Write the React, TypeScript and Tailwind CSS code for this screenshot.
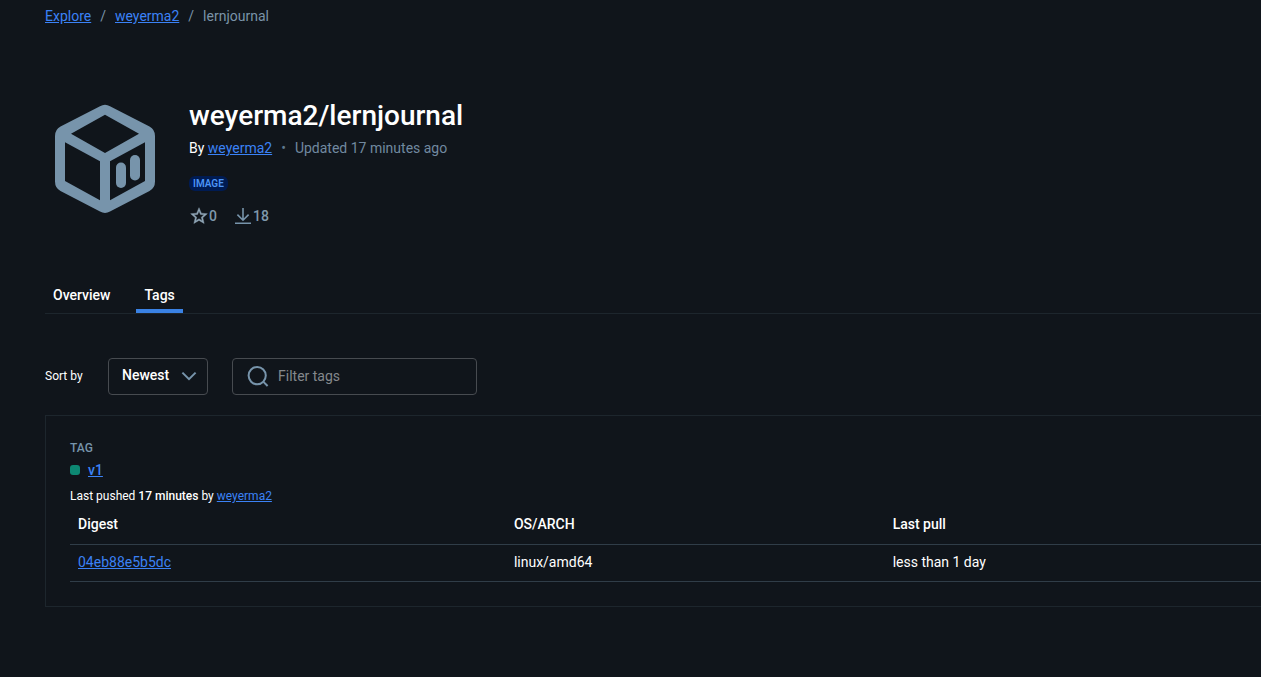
import { useState } from "react";

const link = "text-[#3b82f6] underline";

function PackageLogo() {
  return (
    <svg viewBox="15 14 100 110" className="h-[110px] w-[100px]" fill="#7794ab" aria-hidden="true">
      <path
        fillRule="evenodd"
        d="M60 16.2 Q65 13.2 70 16.2 L109.5 36.5 Q115 39.5 115 46 V91.5 Q115 98 109.5 101 L70 121.6 Q65 124.4 60 121.6 L20.5 101 Q15 98 15 91.5 V46 Q15 39.5 20.5 36.5 Z M65 24.8 L31 43.7 L65 63 L99 43.7 Z M25 52.3 V91 L60 110.3 V71.3 Z M105 52.3 L70 71.3 V110.3 L105 91 Z"
      />
      <rect x="76" y="72.5" width="10" height="25.5" rx="5" />
      <rect x="90" y="65" width="10" height="25.5" rx="5" />
    </svg>
  );
}

function StarIcon() {
  return (
    <svg viewBox="0 0 24 24" className="size-5" fill="#8fa5b6" stroke="#8fa5b6" strokeWidth="0.5" aria-hidden="true">
      <path d="M22 9.24l-7.19-.62L12 2 9.19 8.63 2 9.24l5.46 4.73L5.82 21 12 17.27 18.18 21l-1.63-7.03L22 9.24zM12 15.4l-3.76 2.27 1-4.28-3.32-2.88 4.38-.38L12 6.1l1.71 4.04 4.38.38-3.32 2.88 1 4.28L12 15.4z" />
    </svg>
  );
}

function DownloadIcon() {
  return (
    <svg viewBox="0 0 20 20" className="size-5" fill="none" stroke="#7794ab" strokeWidth="1.6" aria-hidden="true">
      <path d="M10 2v12.2M4.4 8.6l5.6 5.6 5.6-5.6M2 17.3h16" />
    </svg>
  );
}

function SearchIcon() {
  return (
    <svg viewBox="0 0 24 24" className="size-6 shrink-0" fill="none" stroke="#7794ab" strokeWidth="2" aria-hidden="true">
      <circle cx="11.2" cy="10.6" r="8.6" />
      <path d="M17.2 16.6l4.4 4.4" />
    </svg>
  );
}

export default function App() {
  const [filter, setFilter] = useState("");
  return (
    <div className="min-h-screen bg-[#10151b] pl-[45px] font-['Roboto',sans-serif] text-sm text-white">
      <nav aria-label="Breadcrumb" className="flex h-8 items-center gap-[9px] text-[#7a93a8]">
        <a href="#explore" className={link}>Explore</a>
        <span>/</span>
        <a href="#owner" className={link}>weyerma2</a>
        <span>/</span>
        <span>lernjournal</span>
      </nav>

      <header className="mt-[66px] flex items-start">
        <div className="mt-[6px] ml-[10px]">
          <PackageLogo />
        </div>
        <div className="ml-[34px]">
          <h1 className="text-[28px] leading-[36px] font-medium">weyerma2/lernjournal</h1>
          <div className="mt-1 flex h-5 items-center">
            <span>By <a href="#owner" className={link}>weyerma2</a></span>
            <span className="mx-[9px] text-[#5f788c]">•</span>
            <span className="text-[#7189a0]">Updated 17 minutes ago</span>
          </div>
          <div className="mt-[18px] flex">
            <span className="rounded-md bg-[#001b52] px-1 text-[10px] leading-[15px] font-semibold text-[#4d95f7]">IMAGE</span>
          </div>
          <div className="mt-[15px] mb-px flex h-5 items-center gap-4 font-medium text-[#7f98ab]">
            <span className="flex items-center"><StarIcon />0</span>
            <span className="flex items-center"><DownloadIcon />18</span>
          </div>
        </div>
      </header>

      <div role="tablist" className="mt-[50px] flex gap-[18px] border-b border-[#1d262d] font-medium">
        <button role="tab" aria-selected="false" className="h-9 border-b-4 border-transparent px-2 pt-1">Overview</button>
        <button role="tab" aria-selected="true" className="h-9 border-b-4 border-[#3a82e4] px-2 pt-1">Tags</button>
      </div>

      <div className="mt-11 flex items-center">
        <label htmlFor="sort" className="w-[63px] pb-0.5 text-xs">Sort by</label>
        <div className="relative">
          <select id="sort" className="h-[37px] w-[100px] appearance-none rounded border border-[#474b50] bg-[#10151b] pb-1 pl-[13px] font-medium">
            <option>Newest</option>
            <option>Oldest</option>
          </select>
          <svg viewBox="0 0 16 16" className="pointer-events-none absolute top-[10px] right-[11px] size-4" fill="none" stroke="#7794ab" strokeWidth="2" aria-hidden="true">
            <path d="M1.4 4.6L8 11.2l6.6-6.6" />
          </svg>
        </div>
        <div className="ml-6 flex h-[37px] w-[245px] items-center gap-2 rounded border border-[#474b50] pl-[13px]">
          <SearchIcon />
          <input
            aria-label="Filter tags"
            placeholder="Filter tags"
            value={filter}
            onChange={(e) => setFilter(e.target.value)}
            className="min-w-0 flex-1 bg-transparent pb-0.5 outline-none placeholder:text-[#84888c]"
          />
        </div>
      </div>

      <section className="mt-5 border-y border-l border-[#1d262d] pt-6 pb-6 pl-6">
        <p className="text-xs leading-4 font-medium text-[#7794ab]">TAG</p>
        <div className="mt-1 flex h-5 items-center gap-2">
          <span className="size-[10px] rounded-[3px] bg-[#0d8873]" />
          <a href="#v1" className={`${link} font-medium`}>v1</a>
        </div>
        <p className="mt-2 text-xs leading-4">
          Last pushed <strong className="font-medium">17 minutes</strong> by <a href="#owner" className={link}>weyerma2</a>
        </p>
        <table className="w-full table-fixed text-left">
          <thead>
            <tr className="h-10 border-b border-[#303d48]">
              <th className="w-[36.6%] px-2 font-medium">Digest</th>
              <th className="w-[31.8%] px-2 font-medium">OS/ARCH</th>
              <th className="px-2 font-medium">Last pull</th>
            </tr>
          </thead>
          <tbody>
            <tr className="h-[37px] border-b border-[#303d48]">
              <td className="px-2 pb-0.5"><a href="#digest" className={link}>04eb88e5b5dc</a></td>
              <td className="px-2 pb-0.5">linux/amd64</td>
              <td className="px-2 pb-0.5">less than 1 day</td>
            </tr>
          </tbody>
        </table>
      </section>
    </div>
  );
}
